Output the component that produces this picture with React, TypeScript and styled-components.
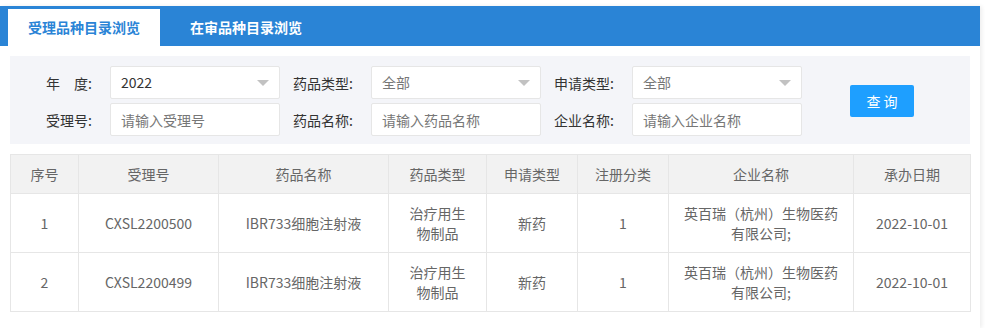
import React from "react";
import styled, { createGlobalStyle } from "styled-components";

const GlobalStyle = createGlobalStyle`
  html, body {
    margin: 0;
    padding: 0;
    background: #fff;
    font-family: "Noto Sans CJK SC", "Noto Sans", sans-serif;
    font-size: 14px;
  }
`;

const Page = styled.div`
  width: 980px;
  min-height: calc(100vh - 6px);
  margin-top: 6px;
  box-shadow: 2px 0 4px rgba(0, 0, 0, 0.07);
`;

const TabBar = styled.div`
  height: 40px;
  background: #2a84d6;
  display: flex;
  align-items: flex-end;
  padding-left: 8px;
  gap: 10px;
`;

const Tab = styled.div<{ $active?: boolean }>`
  height: 37px;
  line-height: 37px;
  padding: 0 20px;
  font-size: 14px;
  font-weight: bold;
  color: ${(p) => (p.$active ? "#2a84d6" : "#fff")};
  background: ${(p) => (p.$active ? "#fff" : "transparent")};
  cursor: pointer;
`;

const Filters = styled.div`
  margin: 10px 10px 0;
  background: #f4f5f9;
  padding: 10px 9px 8px;
  display: flex;
  align-items: center;
`;

const FieldGrid = styled.div`
  display: grid;
  grid-template-columns: repeat(3, 91px 170px);
  row-gap: 4px;
  align-items: center;
`;

const Label = styled.label`
  text-align: right;
  padding-right: 18px;
  color: #333;
  font-size: 14px;
  white-space: nowrap;
`;

const Box = styled.div`
  position: relative;
  height: 33px;
  box-sizing: border-box;
  background: #fff;
  border: 1px solid #e6e6e6;
  border-radius: 2px;
`;

const TextInput = styled.input`
  width: 100%;
  height: 100%;
  box-sizing: border-box;
  border: 0;
  outline: none;
  background: transparent;
  padding: 0 10px;
  font-family: inherit;
  font-size: 14px;
  color: #333;
  &::placeholder {
    color: #777;
  }
`;

const SelectValue = styled.div<{ $muted?: boolean }>`
  line-height: 31px;
  padding: 0 30px 0 10px;
  color: ${(p) => (p.$muted ? "#777" : "#333")};
`;

const Caret = styled.span`
  position: absolute;
  right: 10px;
  top: 13px;
  width: 0;
  height: 0;
  border-left: 6px solid transparent;
  border-right: 6px solid transparent;
  border-top: 6px solid #c2c2c2;
`;

const SearchButton = styled.button`
  margin-left: 48px;
  width: 64px;
  height: 32px;
  border: 0;
  border-radius: 2px;
  background: #1e9fff;
  color: #fff;
  font-family: inherit;
  font-size: 14px;
  letter-spacing: 3px;
  text-indent: 3px;
  cursor: pointer;
`;

const Table = styled.table`
  margin: 10px 10px 0;
  width: 960px;
  border-collapse: collapse;
  table-layout: fixed;
  color: #666;
  font-size: 14px;
`;

const Th = styled.th`
  background: #f2f2f2;
  font-weight: normal;
  border: 1px solid #e6e6e6;
  padding: 9px 15px;
  line-height: 20px;
  text-align: center;
`;

const Td = styled.td`
  border: 1px solid #e6e6e6;
  padding: 9px 15px;
  line-height: 20px;
  text-align: center;
  word-break: break-all;
`;

const Select = ({ value, muted }: { value: string; muted?: boolean }) => (
  <Box>
    <SelectValue $muted={muted}>{value}</SelectValue>
    <Caret />
  </Box>
);

const Field = ({ placeholder }: { placeholder: string }) => (
  <Box>
    <TextInput placeholder={placeholder} />
  </Box>
);

const columns = [
  { title: "序号", width: 68 },
  { title: "受理号", width: 140 },
  { title: "药品名称", width: 170 },
  { title: "药品类型", width: 98 },
  { title: "申请类型", width: 91 },
  { title: "注册分类", width: 91 },
  { title: "企业名称", width: 185 },
  { title: "承办日期", width: 117 },
];

const rows = [
  ["1", "CXSL2200500", "IBR733细胞注射液", "治疗用生物制品", "新药", "1", "英百瑞（杭州）生物医药有限公司;", "2022-10-01"],
  ["2", "CXSL2200499", "IBR733细胞注射液", "治疗用生物制品", "新药", "1", "英百瑞（杭州）生物医药有限公司;", "2022-10-01"],
];

export default function App() {
  return (
    <Page>
      <GlobalStyle />
      <TabBar>
        <Tab $active>受理品种目录浏览</Tab>
        <Tab>在审品种目录浏览</Tab>
      </TabBar>

      <Filters>
        <FieldGrid>
          <Label>年　度:</Label>
          <Select value="2022" />
          <Label>药品类型:</Label>
          <Select value="全部" muted />
          <Label>申请类型:</Label>
          <Select value="全部" muted />

          <Label>受理号:</Label>
          <Field placeholder="请输入受理号" />
          <Label>药品名称:</Label>
          <Field placeholder="请输入药品名称" />
          <Label>企业名称:</Label>
          <Field placeholder="请输入企业名称" />
        </FieldGrid>
        <SearchButton>查询</SearchButton>
      </Filters>

      <Table>
        <colgroup>
          {columns.map((c) => (
            <col key={c.title} style={{ width: c.width }} />
          ))}
        </colgroup>
        <thead>
          <tr>
            {columns.map((c) => (
              <Th key={c.title}>{c.title}</Th>
            ))}
          </tr>
        </thead>
        <tbody>
          {rows.map((r) => (
            <tr key={r[0]}>
              {r.map((cell, i) => (
                <Td key={i}>{cell}</Td>
              ))}
            </tr>
          ))}
        </tbody>
      </Table>
    </Page>
  );
}
